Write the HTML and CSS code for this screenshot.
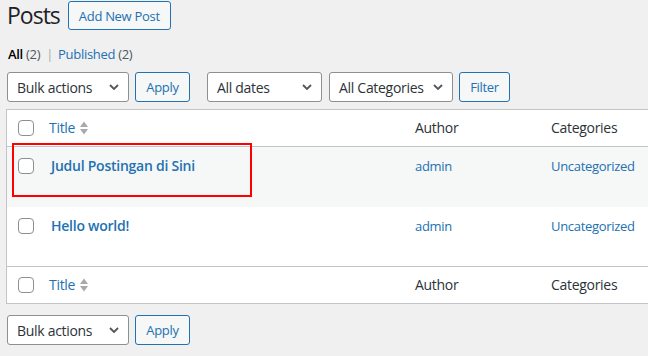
FILE: index.html
```html
<!DOCTYPE html>
<html>
<head>
<meta charset="utf-8">
<title>Posts</title>
<link rel="stylesheet" href="styles.css">
</head>
<body>
<div class="page">
  <div class="title-row">
    <h1 class="title">Posts</h1>
    <a class="btn btn-add">Add New Post</a>
  </div>

  <ul class="views">
    <li><span class="current">All <span class="count">(2)</span></span><span class="sep">|</span></li>
    <li><a class="link">Published <span class="count">(2)</span></a></li>
  </ul>

  <div class="tablenav">
    <div class="select w-bulk"><span>Bulk actions</span><svg class="chev" width="10" height="6" viewBox="0 0 10 6"><polyline points="1,1 5,5 9,1" fill="none" stroke="#50575e" stroke-width="1.8"/></svg></div>
    <a class="btn btn-apply">Apply</a>
    <div class="filters">
      <div class="select w-dates"><span>All dates</span><svg class="chev" width="10" height="6" viewBox="0 0 10 6"><polyline points="1,1 5,5 9,1" fill="none" stroke="#50575e" stroke-width="1.8"/></svg></div>
      <div class="select w-cats"><span>All Categories</span><svg class="chev" width="10" height="6" viewBox="0 0 10 6"><polyline points="1,1 5,5 9,1" fill="none" stroke="#50575e" stroke-width="1.8"/></svg></div>
      <a class="btn btn-filter">Filter</a>
    </div>
  </div>

  <div class="table">
    <div class="row head">
      <div class="cell check"><span class="checkbox"></span></div>
      <div class="cell col-title"><a class="link sort">Title <svg class="sort-ind" width="8" height="14" viewBox="0 0 8 14"><polygon points="0,6 4,0.5 8,6" fill="#a7aaad"/><polygon points="0,8 8,8 4,13.5" fill="#a7aaad"/></svg></a></div>
      <div class="cell">Author</div>
      <div class="cell">Categories</div>
    </div>

    <div class="row post alt">
      <div class="cell check"><span class="checkbox"></span></div>
      <div class="cell col-title"><a class="link row-title">Judul Postingan di Sini</a></div>
      <div class="cell"><a class="link">admin</a></div>
      <div class="cell"><a class="link">Uncategorized</a></div>
      <div class="highlight"></div>
    </div>

    <div class="row post">
      <div class="cell check"><span class="checkbox"></span></div>
      <div class="cell col-title"><a class="link row-title">Hello world!</a></div>
      <div class="cell"><a class="link">admin</a></div>
      <div class="cell"><a class="link">Uncategorized</a></div>
    </div>

    <div class="row head foot">
      <div class="cell check"><span class="checkbox"></span></div>
      <div class="cell col-title"><a class="link sort">Title <svg class="sort-ind" width="8" height="14" viewBox="0 0 8 14"><polygon points="0,6 4,0.5 8,6" fill="#a7aaad"/><polygon points="0,8 8,8 4,13.5" fill="#a7aaad"/></svg></a></div>
      <div class="cell">Author</div>
      <div class="cell">Categories</div>
    </div>
  </div>

  <div class="tablenav bottom">
    <div class="select w-bulk"><span>Bulk actions</span><svg class="chev" width="10" height="6" viewBox="0 0 10 6"><polyline points="1,1 5,5 9,1" fill="none" stroke="#50575e" stroke-width="1.8"/></svg></div>
    <a class="btn btn-apply">Apply</a>
  </div>
</div>
</body>
</html>
```

FILE: styles.css
```css
html, body {
  margin: 0;
  padding: 0;
  overflow: hidden;
  background: #f0f0f1;
}
body {
  font-family: "Open Sans", "Noto Sans", "Liberation Sans", sans-serif;
  font-size: 13px;
  color: #3c434a;
  letter-spacing: -0.3px;
}
.page {
  padding-left: 6px;
  width: 720px;
}
.title-row {
  display: flex;
  align-items: center;
  gap: 8px;
  margin-top: 1px;
  height: 28px;
}
.title {
  margin: 0 0 0 1px;
  font-size: 23px;
  font-weight: 400;
  line-height: 28px;
  color: #1d2327;
  letter-spacing: -1px;
}
.btn {
  display: inline-flex;
  align-items: center;
  justify-content: center;
  box-sizing: border-box;
  border: 1px solid #2271b1;
  border-radius: 3px;
  background: #f6f7f7;
  color: #2271b1;
  font-size: 13px;
  text-decoration: none;
}
.btn-add {
  width: 103px;
  height: 29px;
  margin-top: 1px;
}
.views {
  list-style: none;
  margin: 16px 0 0 2px;
  padding: 0;
  display: flex;
  height: 18px;
  line-height: 18px;
  font-size: 13px;
}
.current {
  color: #000;
  font-weight: 600;
}
.count {
  color: #50575e;
  font-weight: 400;
}
.sep {
  color: #a7aaad;
  margin: 0 5px 0 6px;
}
.link {
  color: #2271b1;
  text-decoration: none;
}
.tablenav {
  display: flex;
  align-items: center;
  margin-top: 9px;
  margin-left: 1px;
  height: 30px;
}
.tablenav.bottom {
  margin-top: 11px;
}
.filters {
  display: flex;
  align-items: center;
  gap: 7px;
  margin-left: 17px;
}
.select {
  box-sizing: border-box;
  height: 30px;
  display: flex;
  align-items: center;
  justify-content: space-between;
  padding: 0 9px 0 9px;
  border: 1px solid #8c8f94;
  border-radius: 3px;
  background: #fff;
  color: #2c3338;
  font-size: 14px;
}
.w-bulk { width: 122px; }
.w-dates { width: 115px; }
.w-cats { width: 124px; }
.chev { flex: none; }
.btn-apply {
  width: 55px;
  height: 30px;
  margin-left: 6px;
}
.btn-filter {
  width: 51px;
  height: 30px;
  margin-left: -1px;
}
.table {
  margin-top: 7px;
  border: 1px solid #c3c4c7;
  border-right: none;
  background: #fff;
}
.row {
  display: grid;
  grid-template-columns: 32px 366px 136px 1fr;
  position: relative;
}
.row.head {
  height: 36px;
  align-items: center;
  color: #2c3338;
  font-size: 14px;
  border-bottom: 1px solid #c3c4c7;
}
.row.foot {
  border-bottom: none;
  border-top: 1px solid #c3c4c7;
}
.cell {
  padding-left: 10px;
  line-height: 20px;
}
.cell.check {
  padding-left: 11px;
  line-height: 0;
}
.checkbox {
  display: inline-block;
  box-sizing: border-box;
  width: 16px;
  height: 16px;
  border: 1px solid #8c8f94;
  border-radius: 4px;
  background: #fff;
}
.sort {
  display: inline-flex;
  align-items: center;
  gap: 5px;
}
.row.post {
  height: 60px;
  align-items: start;
}
.row.post + .row.post {
  height: 59px;
}
.row.post .cell {
  padding-top: 9px;
}
.row.post .cell.check {
  padding-top: 11px;
}
.row.post .col-title {
  padding-left: 12px;
}
.row.alt {
  background: #f6f7f7;
}
.row-title {
  font-size: 14px;
  font-weight: 600;
  letter-spacing: -0.25px;
}
.highlight {
  position: absolute;
  left: 5px;
  top: -4px;
  width: 240px;
  height: 54px;
  box-sizing: border-box;
  border: 2px solid #f00;
}
```
